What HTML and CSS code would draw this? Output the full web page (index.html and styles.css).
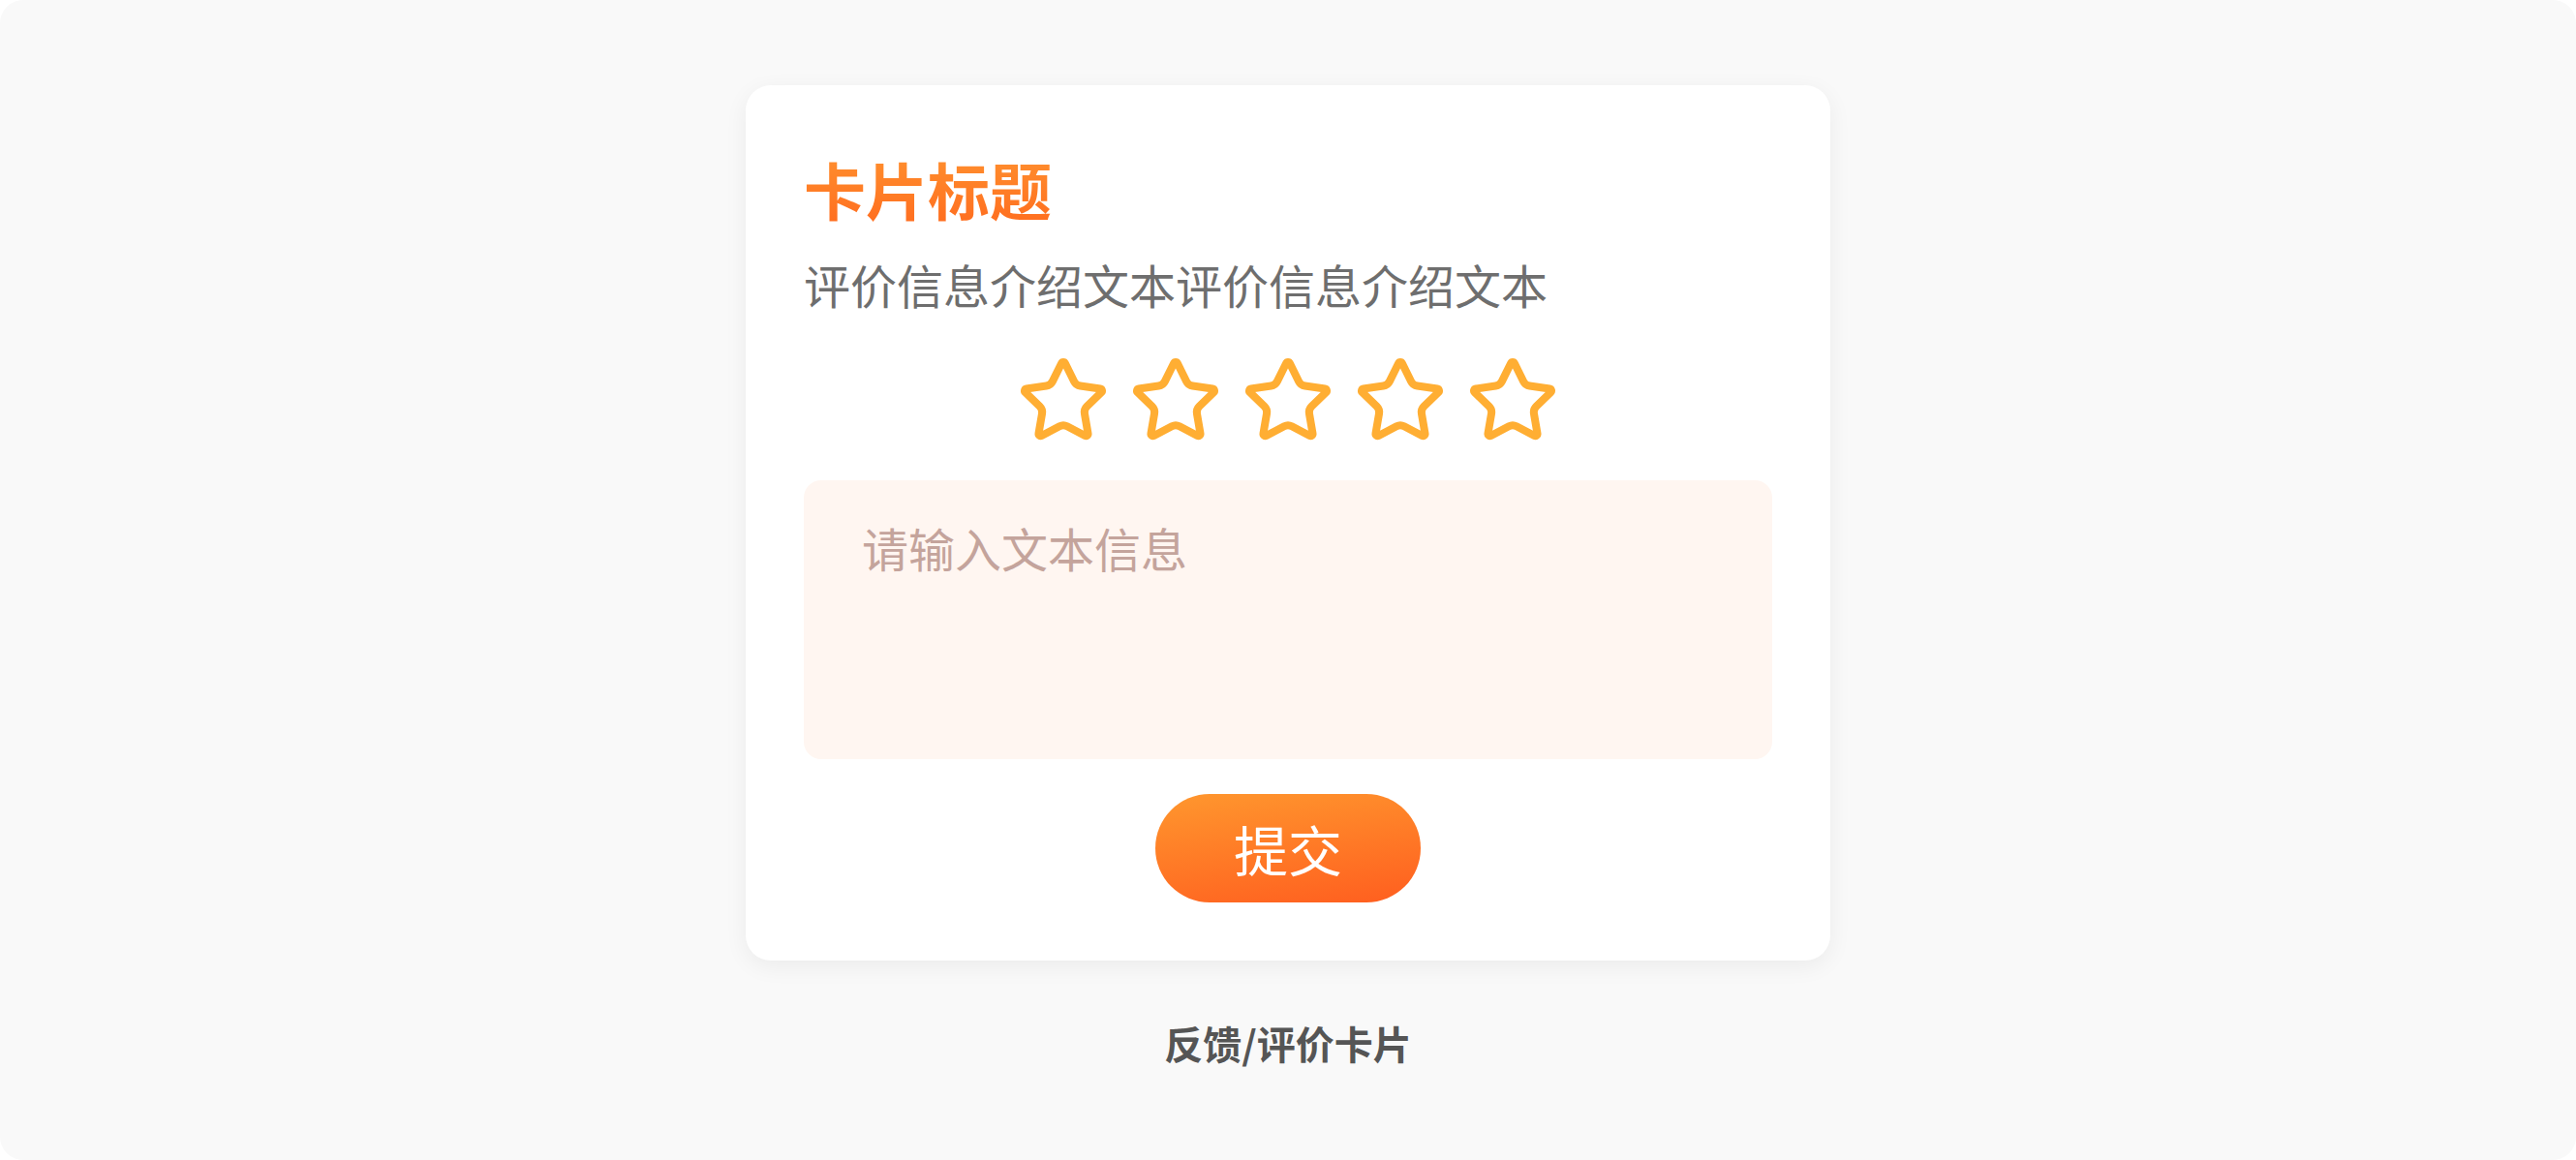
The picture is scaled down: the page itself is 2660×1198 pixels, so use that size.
FILE: index.html
```html
<!DOCTYPE html>
<html lang="zh-CN">
<head>
<meta charset="utf-8">
<title>反馈/评价卡片</title>
<link rel="stylesheet" href="styles.css">
</head>
<body>
<div class="page">
  <div class="card">
    <h1 class="card-title">卡片标题</h1>
    <p class="card-desc">评价信息介绍文本评价信息介绍文本</p>
    <div class="stars">
      <svg class="star" viewBox="0 0 24 24" fill="none" stroke="currentColor" stroke-width="2" stroke-linecap="round" stroke-linejoin="round"><path d="M11.525 2.295a.53.53 0 0 1 .95 0l2.31 4.679a2.123 2.123 0 0 0 1.595 1.16l5.166.756a.53.53 0 0 1 .294.904l-3.736 3.638a2.123 2.123 0 0 0-.611 1.878l.882 5.14a.53.53 0 0 1-.771.56l-4.618-2.428a2.122 2.122 0 0 0-1.973 0L6.396 21.01a.53.53 0 0 1-.77-.56l.881-5.139a2.122 2.122 0 0 0-.611-1.879L2.16 9.795a.53.53 0 0 1 .294-.906l5.165-.755a2.122 2.122 0 0 0 1.597-1.16z"/></svg>
      <svg class="star" viewBox="0 0 24 24" fill="none" stroke="currentColor" stroke-width="2" stroke-linecap="round" stroke-linejoin="round"><path d="M11.525 2.295a.53.53 0 0 1 .95 0l2.31 4.679a2.123 2.123 0 0 0 1.595 1.16l5.166.756a.53.53 0 0 1 .294.904l-3.736 3.638a2.123 2.123 0 0 0-.611 1.878l.882 5.14a.53.53 0 0 1-.771.56l-4.618-2.428a2.122 2.122 0 0 0-1.973 0L6.396 21.01a.53.53 0 0 1-.77-.56l.881-5.139a2.122 2.122 0 0 0-.611-1.879L2.16 9.795a.53.53 0 0 1 .294-.906l5.165-.755a2.122 2.122 0 0 0 1.597-1.16z"/></svg>
      <svg class="star" viewBox="0 0 24 24" fill="none" stroke="currentColor" stroke-width="2" stroke-linecap="round" stroke-linejoin="round"><path d="M11.525 2.295a.53.53 0 0 1 .95 0l2.31 4.679a2.123 2.123 0 0 0 1.595 1.16l5.166.756a.53.53 0 0 1 .294.904l-3.736 3.638a2.123 2.123 0 0 0-.611 1.878l.882 5.14a.53.53 0 0 1-.771.56l-4.618-2.428a2.122 2.122 0 0 0-1.973 0L6.396 21.01a.53.53 0 0 1-.77-.56l.881-5.139a2.122 2.122 0 0 0-.611-1.879L2.16 9.795a.53.53 0 0 1 .294-.906l5.165-.755a2.122 2.122 0 0 0 1.597-1.16z"/></svg>
      <svg class="star" viewBox="0 0 24 24" fill="none" stroke="currentColor" stroke-width="2" stroke-linecap="round" stroke-linejoin="round"><path d="M11.525 2.295a.53.53 0 0 1 .95 0l2.31 4.679a2.123 2.123 0 0 0 1.595 1.16l5.166.756a.53.53 0 0 1 .294.904l-3.736 3.638a2.123 2.123 0 0 0-.611 1.878l.882 5.14a.53.53 0 0 1-.771.56l-4.618-2.428a2.122 2.122 0 0 0-1.973 0L6.396 21.01a.53.53 0 0 1-.77-.56l.881-5.139a2.122 2.122 0 0 0-.611-1.879L2.16 9.795a.53.53 0 0 1 .294-.906l5.165-.755a2.122 2.122 0 0 0 1.597-1.16z"/></svg>
      <svg class="star" viewBox="0 0 24 24" fill="none" stroke="currentColor" stroke-width="2" stroke-linecap="round" stroke-linejoin="round"><path d="M11.525 2.295a.53.53 0 0 1 .95 0l2.31 4.679a2.123 2.123 0 0 0 1.595 1.16l5.166.756a.53.53 0 0 1 .294.904l-3.736 3.638a2.123 2.123 0 0 0-.611 1.878l.882 5.14a.53.53 0 0 1-.771.56l-4.618-2.428a2.122 2.122 0 0 0-1.973 0L6.396 21.01a.53.53 0 0 1-.77-.56l.881-5.139a2.122 2.122 0 0 0-.611-1.879L2.16 9.795a.53.53 0 0 1 .294-.906l5.165-.755a2.122 2.122 0 0 0 1.597-1.16z"/></svg>
    </div>
    <textarea class="input" placeholder="请输入文本信息"></textarea>
    <div class="actions">
      <button class="submit" type="button">提交</button>
    </div>
  </div>
  <div class="caption">反馈/评价卡片</div>
</div>
</body>
</html>
```

FILE: styles.css
```css
html, body {
  margin: 0;
  padding: 0;
  background: #ffffff;
}

body {
  font-family: "Noto Sans CJK SC", "Noto Sans", sans-serif;
}

.page {
  box-sizing: border-box;
  width: 2660px;
  height: 1198px;
  background: #f9f9f9;
  border-radius: 24px;
  padding-top: 88px;
  display: flex;
  flex-direction: column;
  align-items: center;
}

.card {
  box-sizing: border-box;
  width: 1120px;
  height: 904px;
  background: #ffffff;
  border-radius: 26px;
  box-shadow: 0 6px 24px rgba(0, 0, 0, 0.06);
  padding: 60px;
  display: flex;
  flex-direction: column;
}

.card-title {
  margin: 0;
  font-size: 64px;
  line-height: 92px;
  font-weight: 700;
  background: linear-gradient(180deg, #ff9430 0%, #ff6a1e 100%);
  -webkit-background-clip: text;
  background-clip: text;
  color: transparent;
  align-self: flex-start;
}

.card-desc {
  margin: 18px 0 0;
  font-size: 48px;
  line-height: 70px;
  color: #6e6e6e;
}

.stars {
  margin-top: 38px;
  display: flex;
  justify-content: center;
  gap: 20px;
  color: #ffae33;
}

.star {
  width: 96px;
  height: 96px;
  display: block;
}

.input {
  box-sizing: border-box;
  margin-top: 34px;
  width: 100%;
  height: 288px;
  border: none;
  outline: none;
  resize: none;
  border-radius: 18px;
  background: #fff6f1;
  padding: 34px 60px;
  font-family: "Noto Sans CJK SC", "Noto Sans", sans-serif;
  font-size: 48px;
  line-height: 70px;
  color: #333333;
}

.input::placeholder {
  color: #c4a49c;
}

.actions {
  margin-top: 36px;
  display: flex;
  justify-content: center;
}

.submit {
  width: 274px;
  height: 112px;
  border: none;
  border-radius: 56px;
  background: linear-gradient(172deg, #ff972e 0%, #ff5e1f 100%);
  color: #ffffff;
  font-family: "Noto Sans CJK SC", "Noto Sans", sans-serif;
  font-size: 56px;
  line-height: 112px;
  padding: 0;
  cursor: pointer;
}

.caption {
  margin-top: 56px;
  font-size: 40px;
  line-height: 58px;
  font-weight: 700;
  color: #555555;
}
```
